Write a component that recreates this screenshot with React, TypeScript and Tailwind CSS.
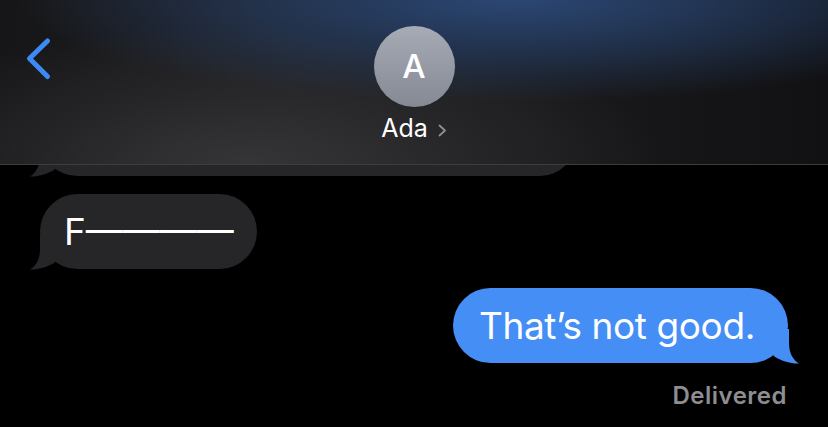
import React from "react";

type Side = "left" | "right";

// the little curled tail at the bottom corner of a bubble
const Tail = ({ side, color }: { side: Side; color: string }) => (
  <svg
    width="32"
    height="35"
    viewBox="0 0 32 35"
    className={`pointer-events-none absolute bottom-[-1px] ${
      side === "left" ? "left-[-10px]" : "right-[-11px] -scale-x-100"
    }`}
    aria-hidden
  >
    <path
      d="M10 0 L10 14 C10 24 6 31 0 34.5 C7 35 16 32.5 24 28 L32 20 L32 0 Z"
      fill={color}
    />
  </svg>
);

const Bubble = ({
  side,
  className,
  children,
}: {
  side: Side;
  className: string;
  children?: React.ReactNode;
}) => {
  const color = side === "left" ? "#262628" : "#448ef6";
  return (
    <div
      className={`relative flex h-[75px] items-center rounded-[37.5px] text-[37px] leading-none text-white ${
        side === "left" ? "self-start bg-[#262628]" : "self-end bg-[#448ef6]"
      } ${className}`}
    >
      <Tail side={side} color={color} />
      <span className="relative">{children}</span>
    </div>
  );
};

const Header = () => (
  <header className="absolute inset-x-0 top-0 z-10 grid h-[165px] grid-cols-[1fr_auto_1fr] border-b border-[#3d3d40] bg-[radial-gradient(ellipse_60%_62%_at_62%_0%,#2b4774_0%,rgba(38,64,106,0.6)_50%,transparent_100%),radial-gradient(ellipse_50%_85%_at_30%_100%,#353538_0%,rgba(50,50,53,0.5)_50%,transparent_100%),linear-gradient(90deg,#161618_0%,#1f1f21_35%,#1a1a1c_65%,#111113_100%)]">
    <div className="pl-[24px] pt-[36px]">
      <svg width="28" height="46" viewBox="0 0 28 46" fill="none" aria-hidden>
        <path
          d="M23.5 5 L5.5 22.5 L23.5 40.5"
          stroke="#3d89f6"
          strokeWidth="5"
          strokeLinecap="round"
          strokeLinejoin="round"
        />
      </svg>
    </div>

    <div className="flex flex-col items-center pt-[26px]">
      <div className="flex h-[81px] w-[81px] items-center justify-center rounded-full bg-gradient-to-b from-[#a7abb5] to-[#858994] text-[33px] font-medium leading-none text-white">
        A
      </div>
      <div className="mt-[6px] flex items-center gap-[10px] text-[25px] leading-[30px] text-white">
        <span>Ada</span>
        <svg width="9" height="13" viewBox="0 0 9 13" fill="none" className="mt-[4px]" aria-hidden>
          <path d="M1.5 1.5 L7 6.5 L1.5 11.5" stroke="#8e8e93" strokeWidth="1.8" strokeLinecap="round" strokeLinejoin="round" />
        </svg>
      </div>
    </div>

    <div />
  </header>
);

export default function App() {
  return (
    <div className="relative h-[427px] w-[828px] overflow-hidden bg-black font-['Inter','Noto_Sans',sans-serif]">
      <Header />

      <main className="flex flex-col px-[40px] pt-[101px]">
        {/* older message, mostly scrolled under the header */}
        <Bubble side="left" className="w-[537px]" />

        <Bubble side="left" className="mt-[18px] w-[217px] pl-[24px]">
          F————
        </Bubble>

        <Bubble side="right" className="mt-[19px] w-[335px] pl-[26px] tracking-[-0.4px]">
          That’s not good.
        </Bubble>

        <p className="mt-[19px] self-end pr-[1px] text-[24px] font-semibold leading-[28px] tracking-[0.5px] text-[#8d8d92]">
          Delivered
        </p>
      </main>
    </div>
  );
}
